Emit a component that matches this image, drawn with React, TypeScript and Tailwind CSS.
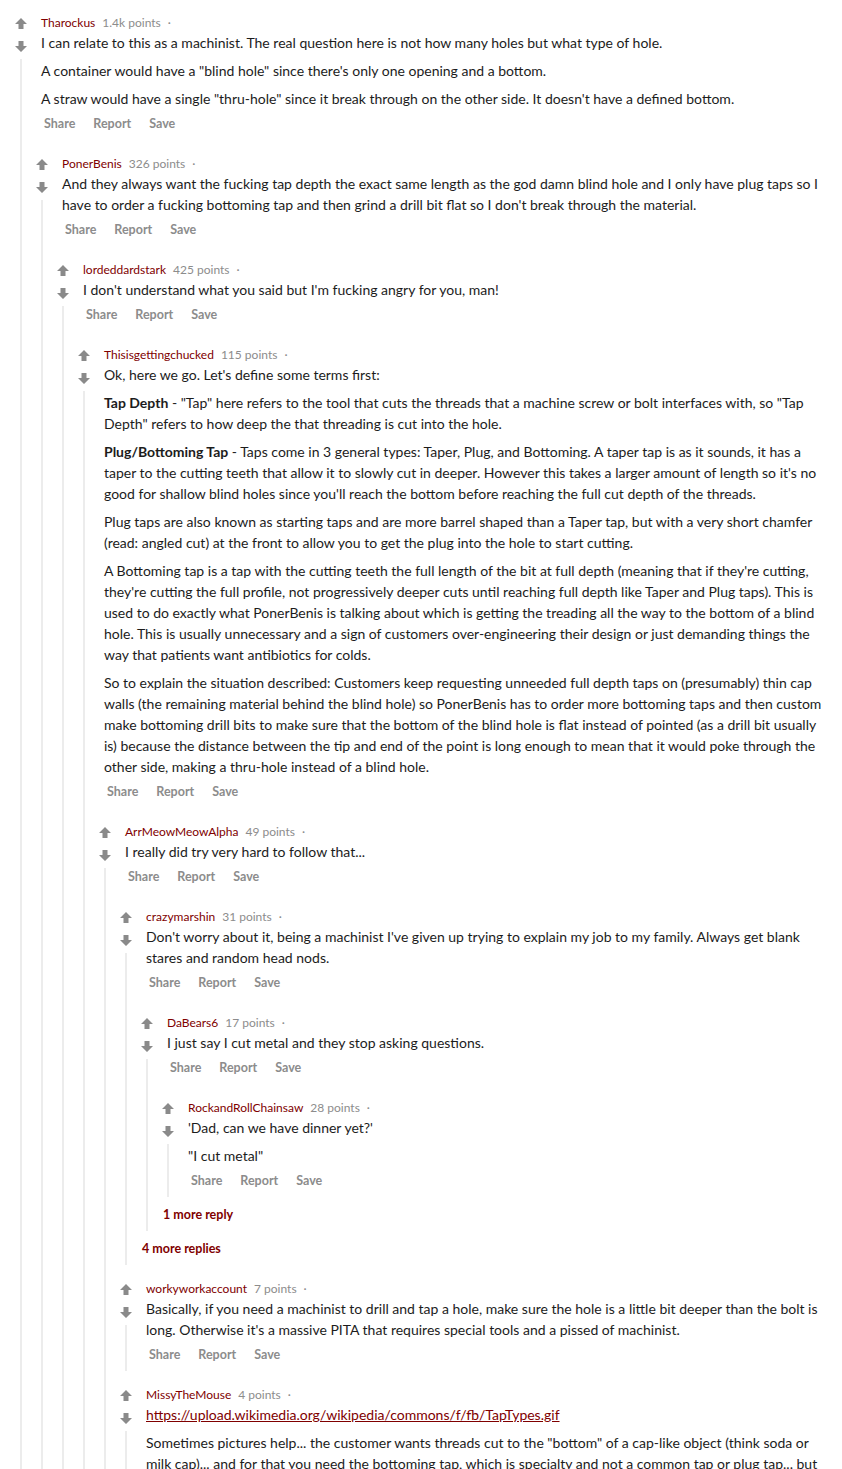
import type { ReactNode } from "react";

type Thread = {
  user: string;
  points: string;
  body: ReactNode[];
  replies?: Thread[];
  more?: string;
};

const thread: Thread = {
  user: "Tharockus",
  points: "1.4k points",
  body: [
    "I can relate to this as a machinist. The real question here is not how many holes but what type of hole.",
    'A container would have a "blind hole" since there\'s only one opening and a bottom.',
    'A straw would have a single "thru-hole" since it break through on the other side. It doesn\'t have a defined bottom.',
  ],
  replies: [
    {
      user: "PonerBenis",
      points: "326 points",
      body: [
        "And they always want the fucking tap depth the exact same length as the god damn blind hole and I only have plug taps so I have to order a fucking bottoming tap and then grind a drill bit flat so I don't break through the material.",
      ],
      replies: [
        {
          user: "lordeddardstark",
          points: "425 points",
          body: ["I don't understand what you said but I'm fucking angry for you, man!"],
          replies: [
            {
              user: "Thisisgettingchucked",
              points: "115 points",
              body: [
                "Ok, here we go. Let's define some terms first:",
                <>
                  <b>Tap Depth</b> - "Tap" here refers to the tool that cuts the threads that a machine screw or bolt interfaces with, so "Tap Depth" refers to how deep the that threading is cut into the hole.
                </>,
                <>
                  <b>Plug/Bottoming Tap</b> - Taps come in 3 general types: Taper, Plug, and Bottoming. A taper tap is as it sounds, it has a taper to the cutting teeth that allow it to slowly cut in deeper. However this takes a larger amount of length so it's no good for shallow blind holes since you'll reach the bottom before reaching the full cut depth of the threads.
                </>,
                "Plug taps are also known as starting taps and are more barrel shaped than a Taper tap, but with a very short chamfer (read: angled cut) at the front to allow you to get the plug into the hole to start cutting.",
                "A Bottoming tap is a tap with the cutting teeth the full length of the bit at full depth (meaning that if they're cutting, they're cutting the full profile, not progressively deeper cuts until reaching full depth like Taper and Plug taps). This is used to do exactly what PonerBenis is talking about which is getting the treading all the way to the bottom of a blind hole. This is usually unnecessary and a sign of customers over-engineering their design or just demanding things the way that patients want antibiotics for colds.",
                "So to explain the situation described: Customers keep requesting unneeded full depth taps on (presumably) thin cap walls (the remaining material behind the blind hole) so PonerBenis has to order more bottoming taps and then custom make bottoming drill bits to make sure that the bottom of the blind hole is flat instead of pointed (as a drill bit usually is) because the distance between the tip and end of the point is long enough to mean that it would poke through the other side, making a thru-hole instead of a blind hole.",
              ],
              replies: [
                {
                  user: "ArrMeowMeowAlpha",
                  points: "49 points",
                  body: ["I really did try very hard to follow that..."],
                  replies: [
                    {
                      user: "crazymarshin",
                      points: "31 points",
                      body: [
                        "Don't worry about it, being a machinist I've given up trying to explain my job to my family. Always get blank stares and random head nods.",
                      ],
                      replies: [
                        {
                          user: "DaBears6",
                          points: "17 points",
                          body: ["I just say I cut metal and they stop asking questions."],
                          replies: [
                            {
                              user: "RockandRollChainsaw",
                              points: "28 points",
                              body: ["'Dad, can we have dinner yet?'", '"I cut metal"'],
                            },
                          ],
                          more: "1 more reply",
                        },
                      ],
                      more: "4 more replies",
                    },
                    {
                      user: "workyworkaccount",
                      points: "7 points",
                      body: [
                        "Basically, if you need a machinist to drill and tap a hole, make sure the hole is a little bit deeper than the bolt is long. Otherwise it's a massive PITA that requires special tools and a pissed of machinist.",
                      ],
                    },
                    {
                      user: "MissyTheMouse",
                      points: "4 points",
                      body: [
                        <a href="#" className="text-[#800000] underline">
                          https://upload.wikimedia.org/wikipedia/commons/f/fb/TapTypes.gif
                        </a>,
                        'Sometimes pictures help... the customer wants threads cut to the "bottom" of a cap-like object (think soda or milk cap)... and for that you need the bottoming tap, which is specialty and not a common tap or plug tap... but the customer doesn\'t care and wants it anyway.',
                      ],
                    },
                  ],
                },
              ],
            },
          ],
        },
      ],
    },
  ],
};

function Arrow({ down }: { down?: boolean }) {
  return (
    <svg width="12" height="11" viewBox="0 0 12 11" className={down ? "rotate-180" : ""}>
      <path d="M6 0 L12 6 L8.5 6 L8.5 11 L3.5 11 L3.5 6 L0 6 Z" fill="#8a8a8a" />
    </svg>
  );
}

function Comment({ c, top }: { c: Thread; top?: boolean }) {
  return (
    <div className={top ? "flex" : "flex mt-[14px]"}>
      {/* votes + thread line */}
      <div className="w-[21px] shrink-0 flex flex-col">
        <div className="ml-[5px] mt-[5px]">
          <Arrow />
        </div>
        <div className="ml-[5px] mt-[12px]">
          <Arrow down />
        </div>
        <div className="ml-[10px] mt-[7px] w-[2px] flex-1 bg-[#ececec]" />
      </div>

      <div className="flex-1 min-w-0">
        <div className="pl-[10px]">
          <div className="flex items-center text-[12px] leading-[19px]">
            <a href="#" className="text-[#800000]">{c.user}</a>
            <span className="ml-[7px] text-[#8c8c8c]">{c.points}</span>
            <span className="ml-[7px] text-[#8c8c8c]">·</span>
          </div>
          {c.body.map((p, i) => (
            <p key={i} className="text-[14px] leading-[21px] mb-[7px] text-[#1c1c1c]">
              {p}
            </p>
          ))}
          <div className="flex gap-[18px] pl-[3px] pb-[8px] text-[12.5px] leading-[16px] font-bold text-[#8c8c8c]">
            <span>Share</span>
            <span>Report</span>
            <span>Save</span>
          </div>
        </div>

        {c.replies?.map((r) => <Comment key={r.user} c={r} />)}

        {c.more && (
          <div className="mt-[10px] mb-[8px] pl-[6px] text-[12.5px] leading-[16px] font-bold text-[#800000]">
            {c.more}
          </div>
        )}
      </div>
    </div>
  );
}

export default function App() {
  return (
    <div className="min-h-screen bg-white px-[10px] pt-[13px] font-['Lato',sans-serif]">
      <Comment c={thread} top />
    </div>
  );
}
